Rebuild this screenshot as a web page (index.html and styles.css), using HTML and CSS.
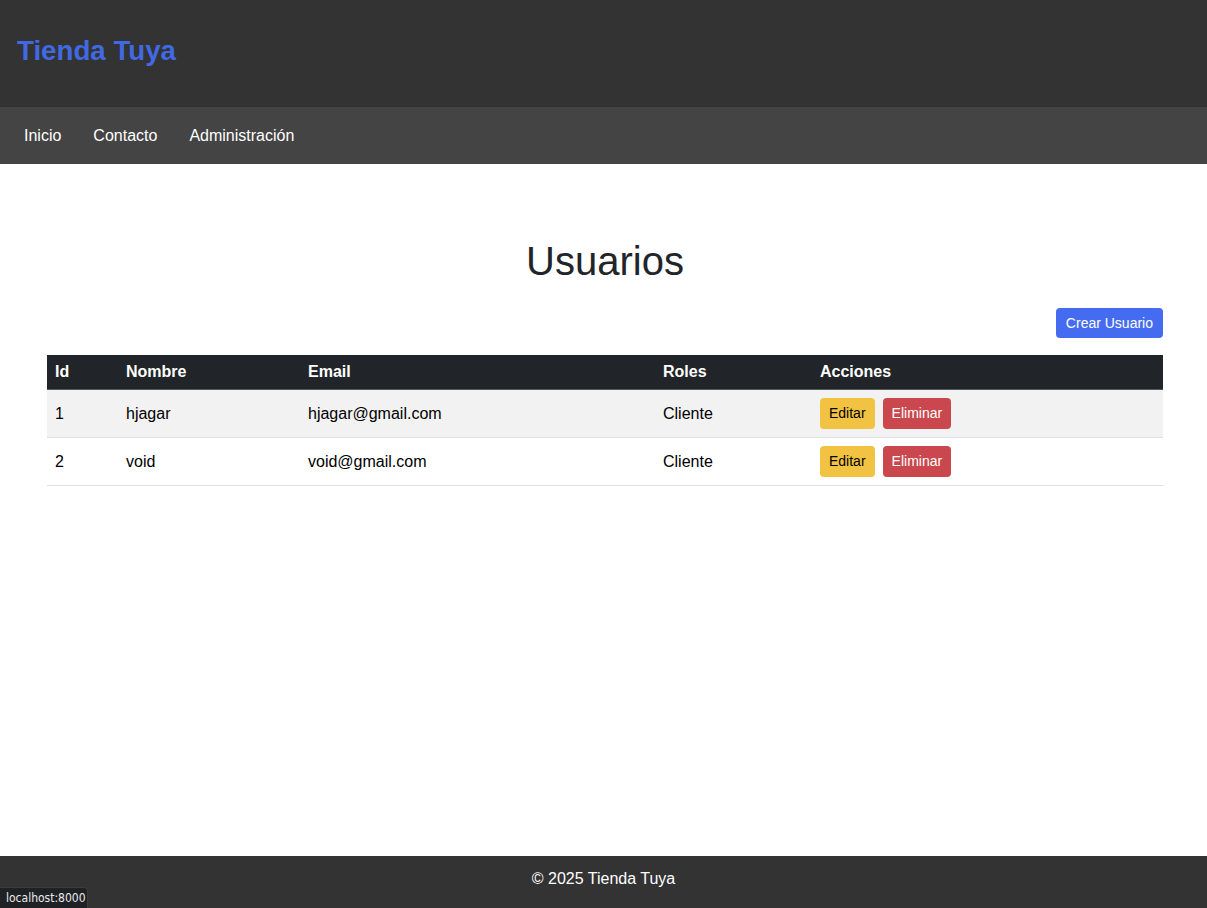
FILE: index.html
```html
<!DOCTYPE html>
<html lang="es">
<head>
<meta charset="utf-8">
<title>Usuarios - Tienda Tuya</title>
<link rel="stylesheet" href="styles.css">
</head>
<body>
<header class="site-header">
  <h1 class="logo">Tienda Tuya</h1>
</header>
<nav class="site-nav">
  <a href="#" class="nav-link">Inicio</a>
  <a href="#" class="nav-link">Contacto</a>
  <a href="#" class="nav-link">Administración</a>
</nav>
<main class="main">
  <h2 class="page-title">Usuarios</h2>
  <div class="toolbar">
    <a href="#" class="btn btn-primary">Crear Usuario</a>
  </div>
  <table class="users">
    <colgroup>
      <col class="c-id"><col class="c-name"><col class="c-email"><col class="c-roles"><col class="c-actions">
    </colgroup>
    <thead>
      <tr><th>Id</th><th>Nombre</th><th>Email</th><th>Roles</th><th>Acciones</th></tr>
    </thead>
    <tbody>
      <tr class="striped">
        <td>1</td><td>hjagar</td><td>hjagar@gmail.com</td><td>Cliente</td>
        <td><div class="actions"><a href="#" class="btn btn-sm btn-warning">Editar</a><a href="#" class="btn btn-sm btn-danger">Eliminar</a></div></td>
      </tr>
      <tr>
        <td>2</td><td>void</td><td>void@gmail.com</td><td>Cliente</td>
        <td><div class="actions"><a href="#" class="btn btn-sm btn-warning">Editar</a><a href="#" class="btn btn-sm btn-danger">Eliminar</a></div></td>
      </tr>
    </tbody>
  </table>
</main>
<footer class="site-footer">© 2025 Tienda Tuya</footer>
<div class="statusbar">localhost:8000</div>
</body>
</html>
```
FILE: styles.css
```css
html, body {
  margin: 0;
  padding: 0;
}
body {
  font-family: "Liberation Sans", Arial, sans-serif;
  font-size: 16px;
  color: #000;
  display: flex;
  flex-direction: column;
  min-height: 100vh;
  background: #fff;
}
.site-header {
  background: #333333;
  padding: 32px 17px 38px;
}
.logo {
  margin: 0;
  font-size: 27.7px;
  line-height: 37px;
  font-weight: bold;
  color: #4169e1;
}
.site-nav {
  background: #444444;
  padding: 0 8px;
  display: flex;
}
.nav-link {
  display: block;
  color: #fff;
  text-decoration: none;
  padding: 19px 16px;
  line-height: 19px;
}
.main {
  flex: 1;
  padding: 73px 44px 0 47px;
}
.page-title {
  margin: 0;
  text-align: center;
  font-size: 40px;
  line-height: 48px;
  font-weight: normal;
  color: #212529;
}
.toolbar {
  display: flex;
  justify-content: flex-end;
  margin-top: 23px;
  margin-bottom: 17px;
}
.btn {
  display: inline-block;
  text-decoration: none;
  border: 1px solid transparent;
  border-radius: 4px;
  font-size: 14px;
}
.btn-primary {
  background: #456cf0;
  color: #fff;
  padding: 4px 9px 4px 9px;
  line-height: 20px;
}
.actions {
  display: flex;
  gap: 8px;
}
.btn-sm {
  padding: 4px 8px;
  line-height: 21px;
}
.btn-warning {
  background: #f2c343;
  color: #000;
}
.btn-danger {
  background: #c9474d;
  color: #fff;
}
.users {
  width: 100%;
  border-collapse: collapse;
  table-layout: fixed;
}
.c-id { width: 71px; }
.c-name { width: 182px; }
.c-email { width: 355px; }
.c-roles { width: 157px; }
.c-actions { width: 351px; }
.users th {
  background: #212529;
  color: #fff;
  text-align: left;
  font-weight: bold;
  padding: 8px 8px 8px;
  line-height: 18px;
  border-bottom: 1px solid #55595c;
}
.users td {
  padding: 8px;
  line-height: 18px;
  border-bottom: 1px solid #dee2e6;
  vertical-align: middle;
}
.striped td {
  background: #f2f2f2;
}
.site-footer {
  background: #333333;
  color: #fff;
  text-align: center;
  padding: 14px 17px 20px;
  line-height: 18px;
}
.statusbar {
  position: fixed;
  left: 0;
  bottom: 0;
  width: 75px;
  background: #202124;
  color: #e8eaed;
  font-family: "DejaVu Sans Condensed", "Liberation Sans Narrow", sans-serif;
  font-size: 12px;
  line-height: 20px;
  padding: 0 6px;
  border-top-right-radius: 4px;
  border-top: 1px solid #3c3c3c;
  border-right: 1px solid #3c3c3c;
}
```
